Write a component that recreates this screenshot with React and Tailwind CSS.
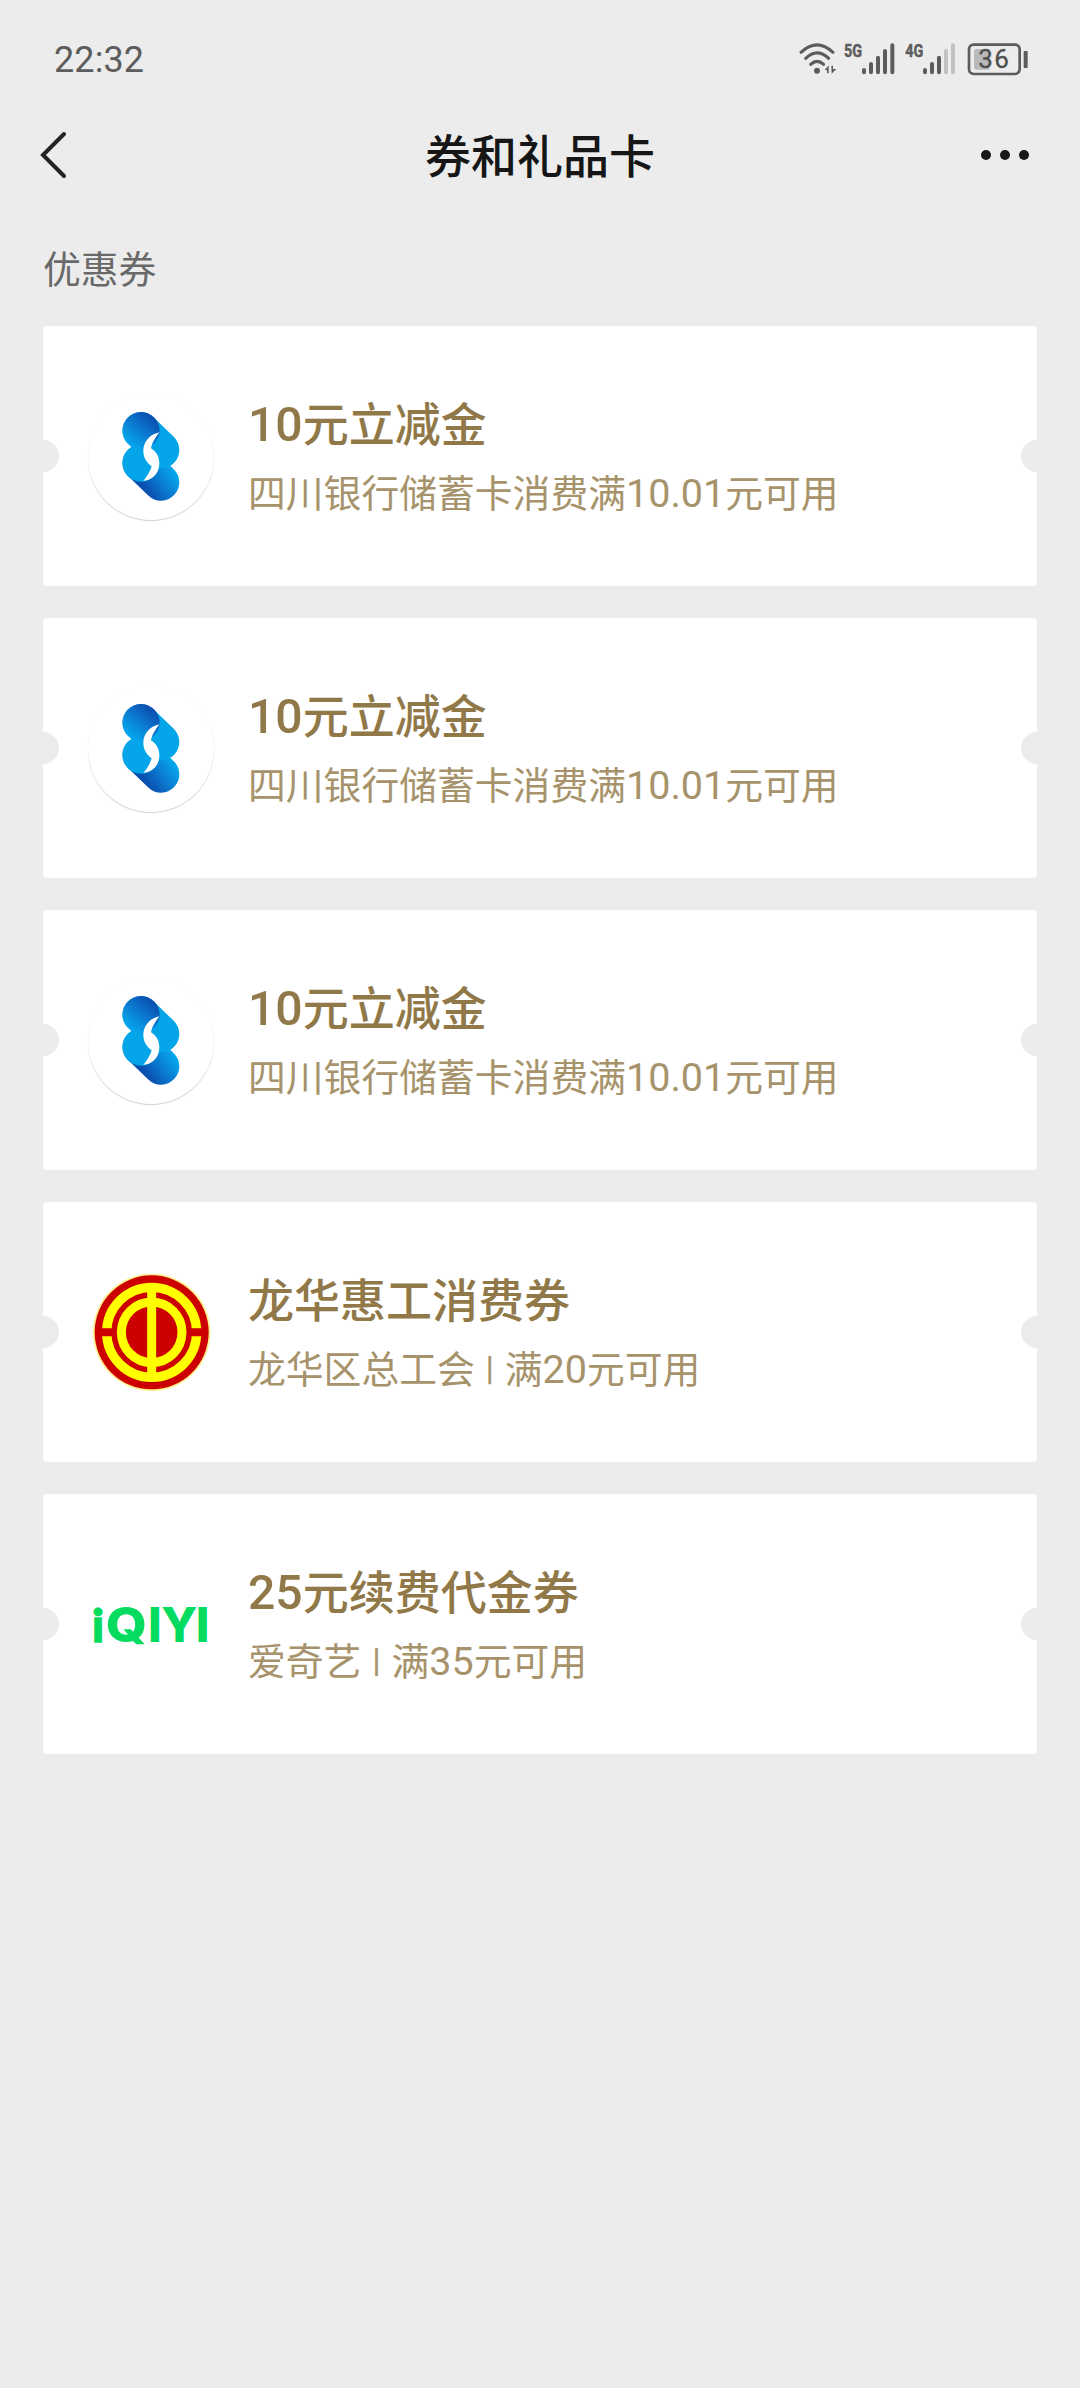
import React from 'react';

function StatusIcons() {
  return (
    <svg className="h-[60px] w-[260px]" viewBox="0 0 780 180" fill="none">
      <g stroke="#5c5c5c" strokeWidth="9" strokeLinecap="round">
        <path d="M63 67 Q111 22 159 67" />
        <path d="M77 85 Q111 52 146 85" />
        <path d="M92 103 Q111 85 131 103" />
      </g>
      <circle cx="111" cy="122" r="9" fill="#5c5c5c" />
      <path d="M134 120 L146 106 V130 H141 V120 Z" fill="#5c5c5c" />
      <path d="M154 107 H159 V117 H169 L155 131 Z" fill="#5c5c5c" />
      <g fill="#5c5c5c" stroke="#5c5c5c" strokeWidth="1.5" fontFamily="'Roboto', sans-serif" fontWeight="700" fontSize="56">
        <text x="192" y="82" textLength="54" lengthAdjust="spacingAndGlyphs">5G</text>
        <text x="376" y="82" textLength="54" lengthAdjust="spacingAndGlyphs">4G</text>
      </g>
      <g strokeWidth="12" strokeLinecap="round" stroke="#5c5c5c">
        <path d="M252 120 V127 M273 102 V127 M294 83 V127 M315 63 V127 M337 46 V127" />
        <path d="M435 120 V127 M456 102 V127 M477 83 V127" />
        <path d="M498 63 V127 M519 46 V127" stroke="#c1c1c1" />
      </g>
      <rect x="567" y="44" width="152" height="88" rx="14" stroke="#5c5c5c" strokeWidth="8" />
      <path d="M590 57 H628 V119 H590 Q582 119 582 111 V65 Q582 57 590 57Z" fill="#bababa" />
      <rect x="731" y="63" width="12" height="51" rx="3" fill="#5c5c5c" />
      <text x="595 643" y="115" fontFamily="'Roboto', sans-serif" fontSize="78" fill="#4f4f4f" stroke="#4f4f4f" strokeWidth="1">36</text>
    </svg>
  );
}

function BankLogo({ id }) {
  const upper = `upper-${id}`;
  const lower = `lower-${id}`;
  return (
    <svg className="size-[126px]" viewBox="24 12 378 378">
      <defs>
        <linearGradient id={upper} gradientUnits="userSpaceOnUse" x1="222" y1="88" x2="158" y2="165">
          <stop offset="0" stopColor="#0a50b0" />
          <stop offset="0.5" stopColor="#0b7acf" />
          <stop offset="1" stopColor="#05a4ea" />
        </linearGradient>
        <linearGradient id={lower} gradientUnits="userSpaceOnUse" x1="278" y1="245" x2="200" y2="302">
          <stop offset="0" stopColor="#05a4ea" />
          <stop offset="0.5" stopColor="#0b7acf" />
          <stop offset="1" stopColor="#0a50b0" />
        </linearGradient>
      </defs>
      <g strokeWidth="110" strokeLinecap="round">
        <path d="M183 219 L243 277" stroke={`url(#${lower})`} />
        <path d="M183 122 L243 180" stroke="#04a5e9" />
      </g>
      <circle cx="183" cy="219" r="56" fill="#04a5e9" />
      <circle cx="183" cy="122" r="56" fill={`url(#${upper})`} />
      <path d="M238 127 C206 134 190 159 190 182 C190 205 201 218 215 229 C210 245 201 260 190 273 C218 270 238 250 238 220 C238 199 228 185 213 175 C216 157 227 142 238 127Z" fill="#fff" />
    </svg>
  );
}

function UnionLogo() {
  return (
    <svg className="size-[126px]" viewBox="24 30 378 378">
      <circle cx="215" cy="217" r="176" fill="#fff08a" />
      <circle cx="215" cy="217" r="171" fill="#cc0000" />
      <circle cx="215" cy="217" r="135" fill="none" stroke="#ffff00" strokeWidth="28" />
      <path d="M60 217 H370" stroke="#cc0000" strokeWidth="24" />
      <circle cx="215" cy="217" r="91" fill="none" stroke="#ffff00" strokeWidth="27" />
      <path d="M215 70 V364" stroke="#ffff00" strokeWidth="27" />
    </svg>
  );
}

function IqiyiLogo() {
  return (
    <svg className="size-[126px]" viewBox="24 -54 378 378">
      <g fontSize="144" fontWeight="800" fill="#05dc5f" fontFamily="Inter, sans-serif">
        <text x="36" y="187" fontFamily="Lato, sans-serif" fontSize="138" fontWeight="900" stroke="#05dc5f" strokeWidth="4">i</text>
        <text x="77" y="187" textLength="124" lengthAdjust="spacingAndGlyphs">Q</text>
        <text x="204 244 347" y="187">IYI</text>
      </g>
    </svg>
  );
}

const coupons = [
  { logo: 'bank', title: '10元立减金', parts: ['四川银行储蓄卡消费满10.01元可用'] },
  { logo: 'bank', title: '10元立减金', parts: ['四川银行储蓄卡消费满10.01元可用'] },
  { logo: 'bank', title: '10元立减金', parts: ['四川银行储蓄卡消费满10.01元可用'] },
  { logo: 'union', title: '龙华惠工消费券', parts: ['龙华区总工会', '满20元可用'] },
  { logo: 'iqiyi', title: '25元续费代金券', parts: ['爱奇艺', '满35元可用'] },
];

// Numerals use a plain grotesque, slightly larger than the surrounding characters.
function Mixed({ text }) {
  return text.split(/([\d.]+)/).map((s, i) =>
    /\d/.test(s) ? <span key={i} className="font-[Roboto,sans-serif] text-[1.045em] leading-none">{s}</span> : s
  );
}

function Coupon({ coupon, id }) {
  return (
    <article className="relative flex h-[260px] overflow-hidden rounded-[4px] bg-white pl-[45px]">
      <span className="absolute -left-4 top-[114px] size-8 rounded-full bg-[#ececec]" />
      <span className="absolute -right-4 top-[114px] size-8 rounded-full bg-[#ececec]" />
      <div className={coupon.logo === 'bank'
        ? 'mt-[68px] size-[126px] shrink-0 rounded-full shadow-[0_1px_1px_#d0d0d0]'
        : 'mt-[68px] size-[126px] shrink-0'}>
        {coupon.logo === 'bank' && <BankLogo id={id} />}
        {coupon.logo === 'union' && <UnionLogo />}
        {coupon.logo === 'iqiyi' && <IqiyiLogo />}
      </div>
      <div className="ml-[34px] pt-[65px]">
        <h2 className="whitespace-nowrap text-[46px] font-medium leading-[60px] text-[#917848]"><Mixed text={coupon.title} /></h2>
        <p className="mt-[15px] flex whitespace-nowrap text-[37.8px] leading-[50px] text-[#a7936b]">
          <span><Mixed text={coupon.parts[0]} /></span>
          {coupon.parts[1] && (
            <>
              <span className="mt-px w-[30px] text-center font-[Roboto,sans-serif] text-[34px] font-medium">|</span>
              <span><Mixed text={coupon.parts[1]} /></span>
            </>
          )}
        </p>
      </div>
    </article>
  );
}

export default function App() {
  return (
    <div className="h-[2388px] w-[1080px] overflow-hidden bg-[#ececec] font-['Noto_Sans_CJK_SC',sans-serif]">
      <div className="flex h-[120px] items-start justify-between pl-[54px] pr-[40px] pt-[30px]">
        <span className="font-[Roboto,sans-serif] text-[36px] leading-[60px] tracking-[0.1px] text-[#5c5c5c]">22:32</span>
        <StatusIcons />
      </div>
      <header className="grid h-[70px] grid-cols-3 items-center">
        <svg className="ml-[38px] h-[50px] w-[30px]" viewBox="0 0 30 50" fill="none">
          <path d="M26 4 L5 25 L26 46" stroke="#242424" strokeWidth="4" strokeLinecap="round" />
        </svg>
        <h1 className="-mt-[5px] whitespace-nowrap text-center text-[46px] font-medium leading-[60px] text-[#161616]">券和礼品卡</h1>
        <div className="mr-[51px] flex justify-end gap-[9px]">
          <span className="size-[10px] rounded-full bg-[#181818]" />
          <span className="size-[10px] rounded-full bg-[#181818]" />
          <span className="size-[10px] rounded-full bg-[#181818]" />
        </div>
      </header>
      <p className="ml-[43px] mt-[52px] h-[84px] text-[37.8px] leading-[50px] text-[#696969]">优惠券</p>
      <main className="mx-[43px] flex flex-col gap-8">
        {coupons.map((c, i) => <Coupon key={i} coupon={c} id={i} />)}
      </main>
    </div>
  );
}
